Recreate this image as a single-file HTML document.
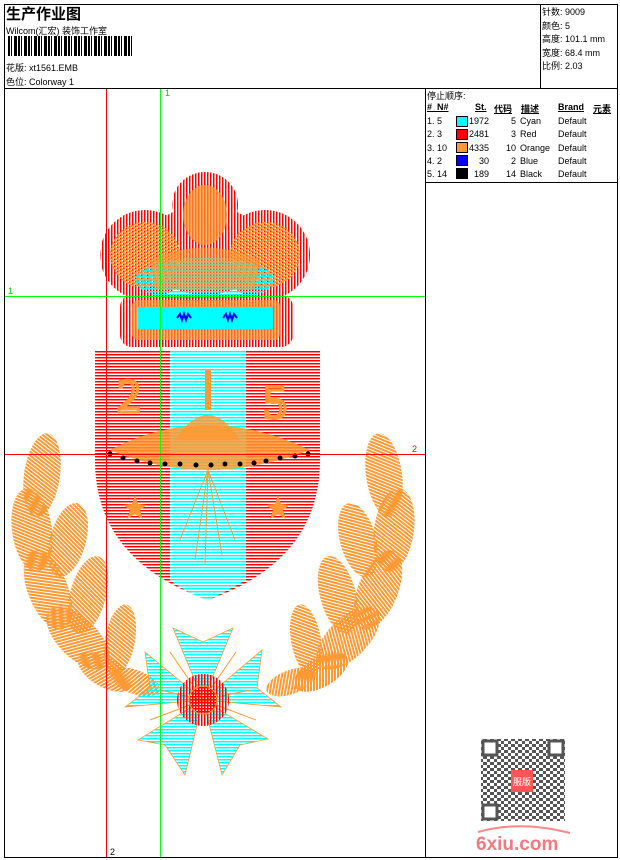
<!DOCTYPE html>
<html><head><meta charset="utf-8"><style>
body{margin:0;background:#fff;width:620px;height:860px;position:relative;overflow:hidden;font-family:"Liberation Sans","Noto Sans CJK SC",sans-serif;font-size:9px;color:#000}
.a{position:absolute;white-space:nowrap}
.l{position:absolute;background:#000}
</style></head><body>
<div class="l" style="left:4px;top:4px;width:614px;height:1px"></div>
<div class="l" style="left:4px;top:857px;width:614px;height:1px"></div>
<div class="l" style="left:4px;top:4px;width:1px;height:854px"></div>
<div class="l" style="left:617px;top:4px;width:1px;height:854px"></div>
<div class="l" style="left:4px;top:88px;width:614px;height:1px"></div>
<div class="l" style="left:540px;top:4px;width:1px;height:84px"></div>
<div class="l" style="left:425px;top:88px;width:1px;height:770px"></div>
<div class="l" style="left:425px;top:182px;width:193px;height:1px"></div>
<div class="a" style="left:6px;top:3px;font-size:15px;font-weight:bold">生产作业图</div>
<div class="a" style="left:6px;top:24px">Wilcom(汇宏) 装饰工作室</div>
<div class="a" style="left:8px;top:36px;width:124px;height:20px;background:repeating-linear-gradient(90deg,#000 0 2px,#fff 2px 3px,#000 3px 4px,#fff 4px 6px,#000 6px 9px,#fff 9px 10px)"></div>
<div class="a" style="left:6px;top:61px">花版: xt1561.EMB</div>
<div class="a" style="left:6px;top:75px">色位: Colorway 1</div>
<div class="a" style="left:542px;top:6px;line-height:13.5px">针数: 9009<br>颜色: 5<br>高度: 101.1 mm<br>宽度: 68.4 mm<br>比例: 2.03</div>
<div class="a" style="left:427px;top:89px">停止顺序:</div>
<div class="a" style="left:427px;top:102px;font-weight:bold;text-decoration:underline">#&nbsp;&nbsp;N#</div>
<div class="a" style="left:475px;top:102px;font-weight:bold;text-decoration:underline">St.</div>
<div class="a" style="left:494px;top:102px;font-weight:bold;text-decoration:underline">代码</div>
<div class="a" style="left:521px;top:102px;font-weight:bold;text-decoration:underline">描述</div>
<div class="a" style="left:558px;top:102px;font-weight:bold;text-decoration:underline">Brand</div>
<div class="a" style="left:593px;top:102px;font-weight:bold;text-decoration:underline">元素</div>
<div class="a" style="left:427px;top:115px;line-height:13.3px">1. 5<br>2. 3<br>3. 10<br>4. 2<br>5. 14</div>
<div class="a" style="left:456px;top:116px;width:10px;height:9px;background:#0ff;border:1px solid #000"></div>
<div class="a" style="left:456px;top:129px;width:10px;height:9px;background:#f00;border:1px solid #000"></div>
<div class="a" style="left:456px;top:142px;width:10px;height:9px;background:#f93;border:1px solid #000"></div>
<div class="a" style="left:456px;top:155px;width:10px;height:9px;background:#00f;border:1px solid #000"></div>
<div class="a" style="left:456px;top:168px;width:10px;height:9px;background:#000;border:1px solid #000"></div>
<div class="a" style="left:468px;top:115px;line-height:13.3px;text-align:right;width:21px">1972<br>2481<br>4335<br>30<br>189</div>
<div class="a" style="left:500px;top:115px;line-height:13.3px;text-align:right;width:16px">5<br>3<br>10<br>2<br>14</div>
<div class="a" style="left:520px;top:115px;line-height:13.3px">Cyan<br>Red<br>Orange<br>Blue<br>Black</div>
<div class="a" style="left:558px;top:115px;line-height:13.3px">Default<br>Default<br>Default<br>Default<br>Default</div>

<svg class="a" style="left:0;top:0" width="620" height="860">
<defs>
<pattern id="rs" width="4" height="3" patternUnits="userSpaceOnUse"><rect width="4" height="1.5" fill="#f00"/></pattern>
<pattern id="cs" width="4" height="3" patternUnits="userSpaceOnUse"><rect width="4" height="1.5" fill="#0ff"/></pattern>
<pattern id="os" width="3" height="3" patternUnits="userSpaceOnUse" patternTransform="rotate(30)"><rect width="3" height="2" fill="#f93"/></pattern>
<pattern id="os2" width="3" height="3" patternUnits="userSpaceOnUse" patternTransform="rotate(-30)"><rect width="3" height="2" fill="#f93"/></pattern>
<pattern id="rv" width="3" height="4" patternUnits="userSpaceOnUse"><rect width="1.5" height="4" fill="#f00"/></pattern>
<pattern id="qr" width="7" height="6" patternUnits="userSpaceOnUse"><rect width="4" height="3" fill="#555"/><rect x="4" y="3" width="3" height="3" fill="#555"/></pattern>
<g id="laurel">
<ellipse cx="0" cy="0" rx="18" ry="42" transform="translate(42,475) rotate(8)"/>
<ellipse cx="0" cy="0" rx="20" ry="42" transform="translate(32,530) rotate(-8)"/>
<ellipse cx="0" cy="0" rx="18" ry="38" transform="translate(68,540) rotate(15)"/>
<ellipse cx="0" cy="0" rx="20" ry="42" transform="translate(48,590) rotate(-22)"/>
<ellipse cx="0" cy="0" rx="18" ry="40" transform="translate(88,595) rotate(15)"/>
<ellipse cx="0" cy="0" rx="20" ry="40" transform="translate(78,638) rotate(-45)"/>
<ellipse cx="0" cy="0" rx="15" ry="36" transform="translate(120,640) rotate(10)"/>
<ellipse cx="0" cy="0" rx="15" ry="30" transform="translate(105,672) rotate(-60)"/>
<ellipse cx="0" cy="0" rx="12" ry="26" transform="translate(135,682) rotate(-70)"/>
</g>
</defs>
<!-- crown -->
<circle cx="205" cy="205" r="33" fill="url(#rv)"/>
<ellipse cx="145" cy="255" rx="45" ry="45" fill="url(#rv)"/>
<ellipse cx="265" cy="255" rx="45" ry="45" fill="url(#rv)"/>
<ellipse cx="205" cy="250" rx="60" ry="45" fill="url(#rv)"/>
<ellipse cx="205" cy="215" rx="22" ry="30" fill="#f93" opacity=".75"/>
<ellipse cx="145" cy="255" rx="35" ry="33" fill="url(#os)"/>
<ellipse cx="265" cy="255" rx="35" ry="33" fill="url(#os2)"/>
<ellipse cx="205" cy="280" rx="70" ry="22" fill="url(#cs)"/>
<path d="M150 260 Q205 235 260 260 L255 290 L155 290Z" fill="#f93" opacity=".6"/>
<rect x="120" y="295" width="173" height="52" rx="12" fill="url(#rv)"/>
<rect x="132" y="300" width="148" height="40" rx="6" fill="#f93" opacity=".7"/>
<rect x="138" y="307" width="135" height="22" fill="#0ff"/>
<path d="M177 318l3-4 2 6 2-6 2 6 2-6 3 4" stroke="#00f" stroke-width="2" fill="none"/>
<path d="M223 318l3-4 2 6 2-6 2 6 2-6 3 4" stroke="#00f" stroke-width="2" fill="none"/>
<!-- shield -->
<path d="M95 350 H320 V460 Q320 560 208 600 Q95 560 95 460Z" fill="url(#rs)"/>
<path d="M170 350 H246 V580 Q220 595 208 600 Q190 595 170 580Z" fill="url(#cs)"/>
<text x="117" y="412" font-size="48" fill="none" stroke="#f93" stroke-width="3" font-family="Liberation Serif">2</text>
<text x="263" y="418" font-size="48" fill="none" stroke="#f93" stroke-width="3" font-family="Liberation Serif">5</text>
<path d="M110 450 Q205 400 310 450 Q205 490 110 450Z" fill="#f93" opacity=".85"/>
<path d="M175 440 Q208 390 240 440Z" fill="#f93" opacity=".8"/>
<rect x="205" y="370" width="6" height="40" fill="#f93"/>
<g stroke="#f93" stroke-width="1"><path d="M208 470 L180 540 M208 470 L195 560 M208 470 L205 565 M208 470 L222 555 M208 470 L235 540"/></g>
<g fill="#000"><circle cx="110" cy="454" r="2.5"/><circle cx="123" cy="458" r="2.5"/><circle cx="137" cy="461" r="2.5"/><circle cx="150" cy="463" r="2.5"/><circle cx="165" cy="464" r="2.5"/><circle cx="180" cy="464" r="2.5"/><circle cx="196" cy="465" r="2.5"/><circle cx="211" cy="465" r="2.5"/><circle cx="225" cy="464" r="2.5"/><circle cx="240" cy="464" r="2.5"/><circle cx="254" cy="463" r="2.5"/><circle cx="266" cy="461" r="2.5"/><circle cx="280" cy="458" r="2.5"/><circle cx="295" cy="456" r="2.5"/><circle cx="308" cy="454" r="2.5"/></g>
<path d="M135 495l3 9 9 1-7 5 3 9-8-5-8 5 3-9-7-5 9-1z" fill="#f93"/>
<path d="M278 495l3 9 9 1-7 5 3 9-8-5-8 5 3-9-7-5 9-1z" fill="#f93"/>
<!-- laurels -->
<use href="#laurel" fill="url(#os)"/>
<use href="#laurel" fill="url(#os2)" transform="translate(426,0) scale(-1,1)"/>
<!-- cross -->
<g fill="url(#cs)" stroke="#f93" stroke-width="0.8">
<path d="M173 628 L203 642 L233 628 L203 700Z"/>
<path d="M145 652 L150 688 L125 707 L203 700Z"/>
<path d="M262 650 L257 688 L281 707 L203 700Z"/>
<path d="M138 740 L165 745 L185 775 L203 700Z"/>
<path d="M268 739 L240 745 L222 775 L203 700Z"/>
</g>
<g stroke="#f93" stroke-width="1"><path d="M203 700 L170 652 M203 700 L236 652 M203 700 L150 720 M203 700 L256 720 M203 700 L160 690 M203 700 L250 690"/></g>
<circle cx="203" cy="700" r="26" fill="url(#rv)"/>
<circle cx="203" cy="700" r="14" fill="url(#rs)" stroke="#f93"/>
<!-- guide lines -->
<rect x="106" y="89" width="1" height="768" fill="#f00"/>
<rect x="160" y="89" width="1" height="768" fill="#0f0"/>
<rect x="5" y="296" width="420" height="1" fill="#0f0"/>
<rect x="5" y="454" width="420" height="1" fill="#f00"/>
<text x="165" y="96" font-size="9" fill="#0c0" font-family="Liberation Sans">1</text>
<text x="8" y="294" font-size="9" fill="#0c0" font-family="Liberation Sans">1</text>
<text x="412" y="452" font-size="9" fill="#f00" font-family="Liberation Sans">2</text>
<text x="110" y="855" font-size="9" fill="#000" font-family="Liberation Sans">2</text>
<!-- QR -->
<rect x="481" y="739" width="84" height="82" fill="url(#qr)"/>
<g fill="#fff" stroke="#555" stroke-width="3"><rect x="483" y="741" width="14" height="14"/><rect x="549" y="741" width="14" height="14"/><rect x="483" y="805" width="14" height="14"/></g>
<rect x="511" y="770" width="22" height="22" fill="#f55"/>
<text x="522" y="785" text-anchor="middle" font-size="9" fill="#fff" font-family="Liberation Sans, Noto Sans CJK SC, sans-serif">服版</text>
<path d="M478 832 Q520 820 570 833" stroke="#f88" stroke-width="2" fill="none"/>
<text x="476" y="850" font-size="19" font-weight="bold" fill="#f07a80" font-family="Liberation Sans">6xiu.com</text>
</svg>
</body></html>
